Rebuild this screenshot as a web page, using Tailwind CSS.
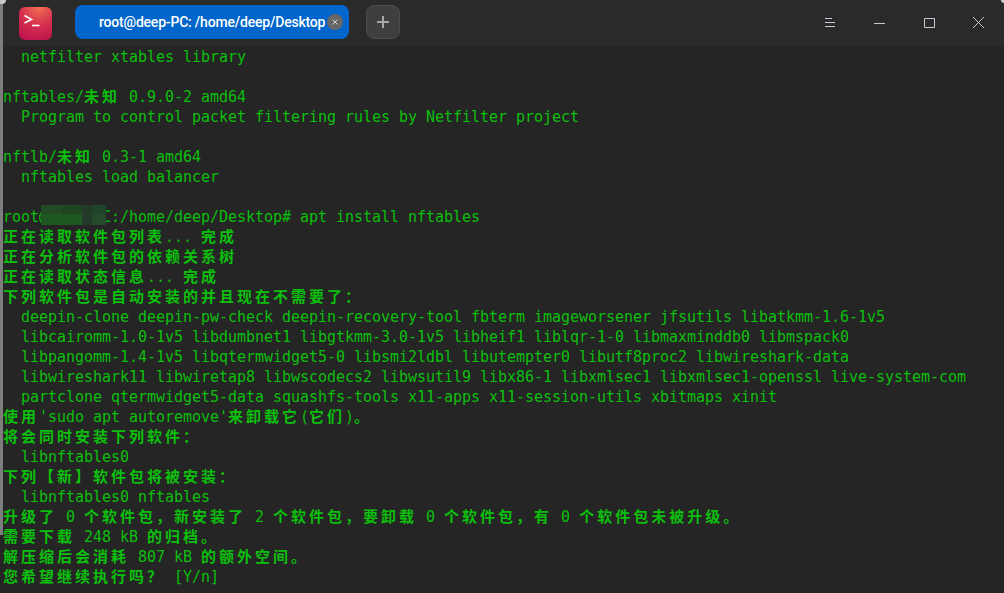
<!DOCTYPE html>
<html lang="zh-CN">
<head>
<meta charset="utf-8">
<title>root@deep-PC: /home/deep/Desktop</title>
<script src="https://cdn.jsdelivr.net/npm/@tailwindcss/browser@4"></script>
</head>
<body class="bg-[#252525]">
<div class="relative w-[1004px] h-[593px] overflow-hidden flex flex-col bg-[#252525]">
  <header class="h-[46px] shrink-0 bg-[#2a2a2a] flex items-start pt-[5px] pl-[19px]">
    <div class="w-[33px] h-[33px] mt-[2px] rounded-[6px] bg-[radial-gradient(circle_at_60%_0%,#f0714f,#d42d4f_50%,#b80f4c)] flex items-center justify-center shrink-0">
      <svg width="33" height="33" viewBox="0 0 33 33" fill="none" stroke="#fff" stroke-width="1.6"><path d="M5.5 8.5 12.5 12.5 5.5 16"/><path d="M13 18.5H20.5"/></svg>
    </div>
    <div class="ml-[23px] w-[274px] h-[34px] rounded-[8px] bg-[#0066cc] flex items-center pl-[24px] shrink-0">
      <span class="w-[228px] text-[14px] font-medium tracking-[-0.2px] text-white whitespace-nowrap font-['Roboto',sans-serif]">root@deep-PC: /home/deep/Desktop</span>
      <span class="w-4 h-4 rounded-full bg-[#666666] flex items-center justify-center">
        <svg width="8" height="8" viewBox="0 0 8 8" stroke="#d0d0d0" stroke-width="1"><path d="M1.5 1.5 6.5 6.5M6.5 1.5 1.5 6.5"/></svg>
      </span>
    </div>
    <div class="ml-[17px] w-[34px] h-[34px] rounded-[8px] bg-[#3f3f3f] border border-[#4b4b4b] flex items-center justify-center shrink-0">
      <svg width="14" height="14" viewBox="0 0 14 14" stroke="#a8a8a8" stroke-width="2"><path d="M7 1V13M1 7H13"/></svg>
    </div>
    <div class="ml-auto flex items-start">
      <svg class="mt-[12px] mr-[39px]" width="11" height="11" viewBox="0 0 11 11" stroke="#c4cad6" stroke-width="1"><path d="M1 1.500H8M1 5.500H11M1 9.500H11"/></svg>
      <svg class="mt-[12px] mr-[39px]" width="11" height="11" viewBox="0 0 11 11" stroke="#c4cad6" stroke-width="1"><path d="M0 6.500H11"/></svg>
      <svg class="mt-[13px] mr-[38px]" width="11" height="10" viewBox="0 0 11 10" fill="none" stroke="#c4cad6" stroke-width="1"><path d="M.5.5H10.500V9.500H.5Z"/></svg>
      <svg class="mt-[12px] mr-[20px]" width="11" height="11" viewBox="0 0 11 11" stroke="#c4cad6" stroke-width="1"><path d="M0 0 11 11M11 0 0 11"/></svg>
    </div>
  </header>

  <main class="flex-1 pl-[3px] pt-px text-[15px] leading-5 text-[#0cbf0c] tracking-[-0.03px] [&>div]:whitespace-pre [&>div]:h-5 [&_b]:font-bold [&_b]:tracking-[3px] font-['DejaVu_Sans_Mono','Noto_Sans_CJK_SC',monospace]">
    <div>  netfilter xtables library</div>
    <div></div>
    <div>nftables/<b>未知</b> 0.9.0-2 amd64</div>
    <div>  Program to control packet filtering rules by Netfilter project</div>
    <div></div>
    <div>nftlb/<b>未知</b> 0.3-1 amd64</div>
    <div>  nftables load balancer</div>
    <div></div>
    <div>root@deep-PC:/home/deep/Desktop# apt install nftables</div>
    <div><b>正在读取软件包列表</b>... <b>完成</b></div>
    <div><b>正在分析软件包的依赖关系树</b></div>
    <div><b>正在读取状态信息</b>... <b>完成</b></div>
    <div><b>下列软件包是自动安装的并且现在不需要了：</b></div>
    <div>  deepin-clone deepin-pw-check deepin-recovery-tool fbterm imageworsener jfsutils libatkmm-1.6-1v5</div>
    <div>  libcairomm-1.0-1v5 libdumbnet1 libgtkmm-3.0-1v5 libheif1 liblqr-1-0 libmaxminddb0 libmspack0</div>
    <div>  libpangomm-1.4-1v5 libqtermwidget5-0 libsmi2ldbl libutempter0 libutf8proc2 libwireshark-data</div>
    <div>  libwireshark11 libwiretap8 libwscodecs2 libwsutil9 libx86-1 libxmlsec1 libxmlsec1-openssl live-system-com</div>
    <div>  partclone qtermwidget5-data squashfs-tools x11-apps x11-session-utils xbitmaps xinit</div>
    <div><b>使用</b>'sudo apt autoremove'<b>来卸载它</b>(<b>它们</b>)<b>。</b></div>
    <div><b>将会同时安装下列软件：</b></div>
    <div>  libnftables0</div>
    <div><b>下列【新】软件包将被安装：</b></div>
    <div>  libnftables0 nftables</div>
    <div><b>升级了</b> 0 <b>个软件包，新安装了</b> 2 <b>个软件包，要卸载</b> 0 <b>个软件包，有</b> 0 <b>个软件包未被升级。</b></div>
    <div><b>需要下载</b> 248 kB <b>的归档。</b></div>
    <div><b>解压缩后会消耗</b> 807 kB <b>的额外空间。</b></div>
    <div><b>您希望继续执行吗？</b> [Y/n]</div>
  </main>

  <!-- mosaic that hides the host name -->
  <div class="absolute left-[41px] top-[205px] w-[65px] h-[20px] flex flex-col">
    <div class="h-[9px] flex">
      <div class="w-[21px] bg-[#214a25]"></div>
      <div class="w-[20px] bg-[#1f4522]"></div>
      <div class="w-[10px] bg-[#243a27]"></div>
      <div class="w-[14px] bg-[#20442a]"></div>
    </div>
    <div class="h-[11px] flex">
      <div class="w-[41px] bg-[#1e5722]"></div>
      <div class="w-[10px] bg-[#25392a]"></div>
      <div class="w-[14px] bg-[#244a2a]"></div>
    </div>
  </div>

  <!-- edge of the window behind -->
  <div class="absolute left-0 top-0 w-[3px] h-[535px] bg-[#7d7d7d]"></div>
  <div class="absolute left-0 top-0 w-[6px] h-[4px] bg-[#c9c9c9] rounded-br-[5px]"></div>
  <div class="absolute right-0 top-0 w-[3px] h-[3px] bg-[#c9c9c9] rounded-bl-[3px]"></div>
</div>
</body>
</html>
